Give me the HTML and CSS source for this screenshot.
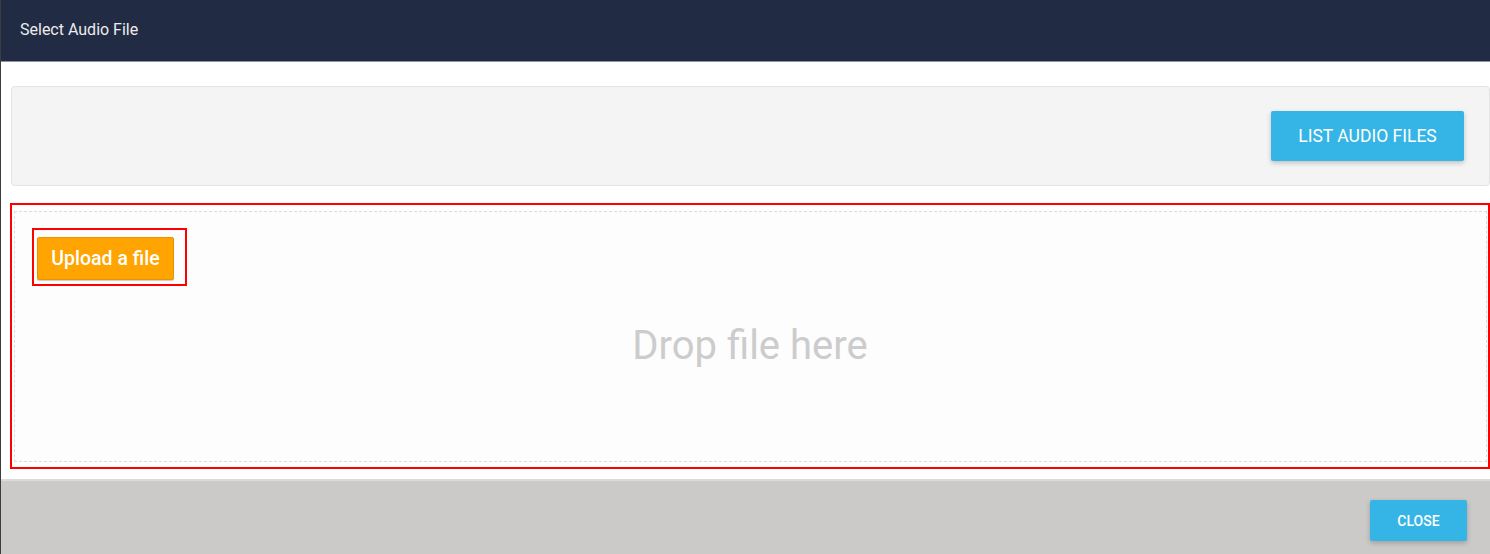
FILE: index.html
```html
<!DOCTYPE html>
<html lang="en">
  <head>
    <meta charset="UTF-8" />
    <meta name="viewport" content="width=device-width, initial-scale=1.0" />
    <title>Select Audio File</title>
    <link rel="stylesheet" href="styles.css">
  </head>
  <body>
    <div class="dialog">
      <div class="dialog-header">Select Audio File</div>
      <div class="dialog-body">
        <div class="well">
          <button class="btn btn-blue btn-list">LIST AUDIO FILES</button>
        </div>
        <div class="uploader-outline">
          <div class="drop-area">
            <div class="upload-outline">
              <button class="btn-upload">Upload a file</button>
            </div>
            <div class="drop-text">Drop file here</div>
          </div>
        </div>
      </div>
      <div class="dialog-footer">
        <button class="btn btn-blue btn-close">CLOSE</button>
      </div>
    </div>
  </body>
</html>
```

FILE: styles.css
```css
* {
  padding: 0;
  margin: 0;
  box-sizing: border-box;
}

body {
  font-family: Roboto, "Liberation Sans", sans-serif;
  background: #fff;
}

.dialog {
  height: 554px;
  border-left: 1px solid #3d3d3d;
  display: flex;
  flex-direction: column;
}

.dialog-header {
  height: 62px;
  background: #222b44;
  border-bottom: 1px solid #8e95a2;
  color: #ececec;
  font-size: 16px;
  padding: 20px 0 0 19px;
}

.dialog-body {
  padding: 24px 0 10px 9px;
}

.well {
  height: 100px;
  margin-left: 1px;
  background: #f4f4f4;
  border: 1px solid #e3e3e3;
  border-radius: 4px;
  display: flex;
  justify-content: flex-end;
  padding: 24px 25px 0 0;
}

.btn {
  border: none;
  color: #fff;
  font-family: Roboto, "Liberation Sans", sans-serif;
  font-weight: 400;
  background: #35b5e5;
  border-radius: 2px;
  box-shadow: 0 2px 5px rgba(0, 0, 0, 0.22);
}

.btn-list {
  width: 193px;
  height: 50px;
  font-size: 17.5px;
}

.uploader-outline {
  margin-top: 17px;
  height: 266px;
  border: 2px solid #f00;
  padding: 6px 1px 5px 2px;
}

.drop-area {
  height: 100%;
  background: #fdfdfd;
  border: 1px dashed #dcdcdc;
  position: relative;
  padding: 16px 0 0 17px;
}

.upload-outline {
  display: inline-block;
  border: 2px solid #f00;
  padding: 7px 11px 4px 3px;
}

.btn-upload {
  display: block;
  width: 137px;
  height: 43px;
  border: 1px solid #e69500;
  border-radius: 2px;
  background: #ffa400;
  color: #fff;
  font-family: Roboto, "Liberation Sans", sans-serif;
  font-weight: 500;
  font-size: 19.5px;
  box-shadow: 0 1px 1px rgba(0, 0, 0, 0.2);
}

.drop-text {
  text-align: center;
  color: #cccccc;
  font-size: 40px;
  margin-top: 36px;
  padding-right: 18px;
}

.dialog-footer {
  flex: 1;
  background: #cbcac8;
  border-top: 2px solid #dcdbd9;
  display: flex;
  justify-content: flex-end;
  padding: 19px 23px 0 0;
}

.btn-close {
  width: 97px;
  height: 41px;
  font-size: 14.5px;
  font-weight: 500;
  font-size: 14px;
}
```
